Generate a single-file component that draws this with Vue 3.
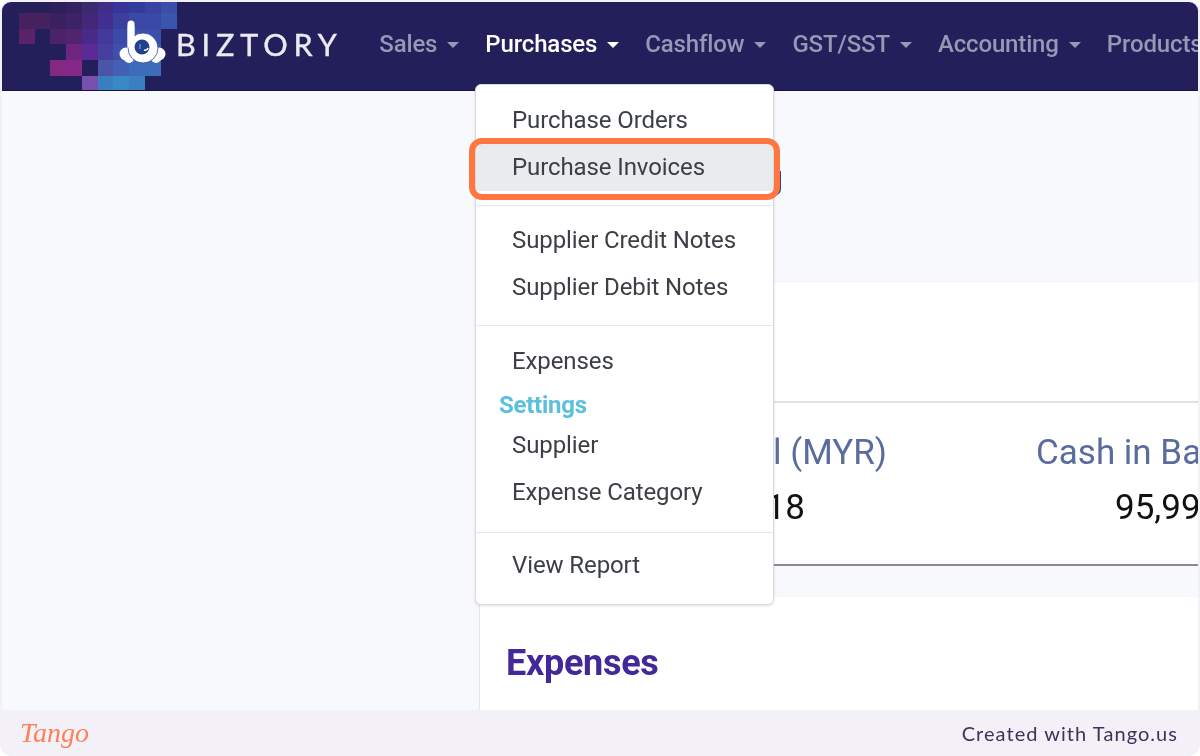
<script setup>
const N = '#231f5a'
const cols = [19, 35, 50, 66, 82, 98, 113, 129, 145, 161, 177]
const rows = [2, 13, 29, 44, 60, 76, 90]
const grid = [
  ['#262058', '#272058', '#2c2059', '#33225f', '#3a2a72', '#3c2f85', '#37359a', '#343a9c', '#3a41a0', '#3a50a8'],
  ['#46215f', '#46215f', '#3a2060', '#3c2266', '#45277a', '#432f90', '#3a3f9e', '#3a49a6', '#3a49a6', '#3b55ae'],
  ['#5a2268', N, '#4c2268', '#4f2570', '#4a2a88', '#44389a', '#3a4aa6', '#3a4fa8', '#3a4fa8', null],
  [null, null, null, '#6f2680', '#5a2a96', '#4540a0', '#3f50ac', '#3c58b0', '#3c58b0', null],
  [null, null, '#85287f', '#85288a', N, '#4a55aa', '#4260b4', '#3d6cba', '#3d6cba', null],
  [null, null, null, null, '#7a50ae', '#3a7ec0', '#3a88c4', '#3a80c0', null, null]
]
const cells = []
grid.forEach((r, y) => r.forEach((fill, x) => {
  if (fill) cells.push({ id: `${x}-${y}`, x: cols[x], y: rows[y], w: cols[x + 1] - cols[x], h: rows[y + 1] - rows[y], fill })
}))
const navItems = [
  { label: 'Sales' },
  { label: 'Purchases', active: true },
  { label: 'Cashflow' },
  { label: 'GST/SST' },
  { label: 'Accounting' },
  { label: 'Products' }
]
</script>

<template>
  <div class="shell">
    <div class="window">
      <header class="nav">
        <svg class="mosaic" width="190" height="89" viewBox="0 0 190 89" aria-hidden="true">
          <rect v-for="c in cells" :key="c.id" :x="c.x - 2" :y="c.y - 2" :width="c.w" :height="c.h" :fill="c.fill" />
        </svg>
        <div class="brand">
          <svg class="logo" width="50" height="50" viewBox="0 0 50 50" aria-hidden="true">
            <circle cx="8" cy="35" r="6.5" fill="#fff" />
            <circle cx="11" cy="39" r="5" fill="#fff" />
            <circle cx="41" cy="35" r="6.5" fill="#fff" />
            <circle cx="38" cy="39" r="5" fill="#fff" />
            <path d="M13 5 V30" stroke="#fff" stroke-width="7" stroke-linecap="round" fill="none" />
            <circle cx="25" cy="29" r="15" fill="#fff" stroke="#2f4a9e" stroke-width="0.8" />
            <path d="M9.6 30 V8 a3.4 3.4 0 0 1 6.8 0 V20 Z" fill="#fff" />
            <circle cx="24" cy="28" r="7.5" fill="#23408a" />
            <path d="M26 31 a3 3 0 0 0 4 -2" stroke="#fff" stroke-width="1.6" fill="none" />
            <path d="M22 25 v5" stroke="#6f8ac8" stroke-width="1.5" />
          </svg>
          <span class="wordmark">BIZTORY</span>
        </div>
        <nav class="links">
          <a v-for="item in navItems" :key="item.label" class="link" :class="{ active: item.active }">
            {{ item.label }}<i class="caret"></i>
          </a>
        </nav>
      </header>

      <main class="content">
        <div class="title-row">
          <h1 class="title">Accounting</h1>
        </div>
        <section class="card top"></section>
        <section class="card stats">
          <div class="stat first">
            <div class="label">Total (MYR)</div>
            <div class="value">1,218</div>
          </div>
          <div class="stat second">
            <div class="label">Cash in Bank (MYR)</div>
            <div class="value">95,999.18</div>
          </div>
        </section>
        <section class="card expenses">
          <h2>Expenses</h2>
        </section>

        <div class="menu">
          <a class="item">Purchase Orders</a>
          <a class="item hover">Purchase Invoices</a>
          <hr class="rule one" />
          <a class="item">Supplier Credit Notes</a>
          <a class="item">Supplier Debit Notes</a>
          <hr class="rule two" />
          <a class="item">Expenses</a>
          <div class="menu-head">Settings</div>
          <a class="item">Supplier</a>
          <a class="item">Expense Category</a>
          <hr class="rule three" />
          <a class="item">View Report</a>
        </div>
      </main>
    </div>
    <footer class="footer">
      <span class="tango">Tango</span>
      <span class="credit">Created with Tango.us</span>
    </footer>
  </div>
</template>

<style>
html, body { margin: 0; background: #fff; }
</style>

<style scoped>
.shell {
  width: 1200px;
  height: 756px;
  display: flex;
  flex-direction: column;
  background: #f3f1f7;
  border-radius: 12px;
  overflow: hidden;
  font-family: Roboto, "Liberation Sans", sans-serif;
  filter: blur(0.5px);
}
.window {
  flex: 1;
  min-height: 0;
  margin: 2px 2px 0;
  display: flex;
  flex-direction: column;
  border-radius: 9px 9px 0 0;
  overflow: hidden;
}
.nav {
  position: relative;
  height: 89px;
  flex: none;
  display: flex;
  align-items: center;
  padding-bottom: 5px;
  background: #231f5a;
  border-bottom: 1px solid #171348;
  box-sizing: border-box;
  white-space: nowrap;
}
.mosaic { position: absolute; left: 0; top: 0; }
.brand {
  position: relative;
  display: flex;
  align-items: center;
  margin-left: 116px;
}
.logo { flex: none; }
.wordmark {
  margin-left: 8px;
  font-family: Lato, sans-serif;
  font-size: 30.5px;
  letter-spacing: 5.9px;
  -webkit-text-stroke: 0.4px #eaeaf2;
  color: #eaeaf2;
}
.links {
  display: flex;
  margin-left: 36.6px;
  gap: 26px;
}
.link {
  display: flex;
  align-items: center;
  font-size: 24px;
  font-weight: 500;
  letter-spacing: -0.15px;
  color: #9797b6;
}
.link.active { color: #fff; }
.caret {
  width: 0;
  height: 0;
  margin-left: 10px;
  margin-top: 3px;
  border-left: 6px solid transparent;
  border-right: 6px solid transparent;
  border-top: 6px solid currentColor;
}
.content {
  position: relative;
  flex: 1;
  min-height: 0;
  background: #f8f9fd;
  padding-left: 477px;
}
.title-row {
  height: 192px;
  box-sizing: border-box;
  padding-top: 66px;
  width: 304px;
  text-align: right;
}
.title {
  margin: 0;
  font-size: 34px;
  line-height: 40px;
  font-weight: 500;
  color: #1d3d8f;
}
.card {
  background: #fff;
  border-left: 1px solid #e6e7ee;
  box-sizing: border-box;
}
.top { height: 118px; }
.stats {
  height: 165px;
  display: flex;
  border-top: 2px solid #dfe1e6;
  border-bottom: 2px solid #8b8b8f;
  padding-top: 27px;
  white-space: nowrap;
}
.stat { flex: none; }
.first { width: 407px; text-align: right; }
.second { margin-left: 149px; }
.label {
  font-size: 35px;
  line-height: 46px;
  color: #5a6c9d;
}
.value {
  font-size: 35px;
  line-height: 46px;
  margin-top: 9px;
  color: #111;
}
.first .value { margin-right: 82px; }
.second .value { margin-left: 79px; }
.expenses {
  height: 114px;
  margin-top: 31px;
  padding: 46px 0 0 26px;
}
.expenses h2 {
  margin: 0;
  font-size: 36px;
  line-height: 40px;
  font-weight: 700;
  letter-spacing: -0.3px;
  color: #43289a;
}
.menu {
  position: absolute;
  left: 473px;
  top: -7px;
  width: 299px;
  height: 521px;
  box-sizing: border-box;
  padding-top: 12px;
  background: #fff;
  border: 1px solid #d9d9dd;
  border-radius: 6px;
  box-shadow: 0 1px 3px rgba(0, 0, 0, .12);
}
.item {
  position: relative;
  display: block;
  height: 47px;
  line-height: 47px;
  padding-left: 36px;
  font-size: 24px;
  color: #3c4046;
  letter-spacing: -0.1px;
}
.hover { background: #e9ecef; }
.hover::after {
  content: "";
  position: absolute;
  left: -7px;
  right: -7px;
  top: -6px;
  bottom: -9px;
  border: 6px solid #ff7640;
  border-radius: 13px;
}
.rule {
  margin: 0;
  border: 0;
  border-top: 1px solid #e6e7ea;
}
.rule.one { margin: 14px 0 11px; }
.rule.two { margin: 14px 0 12px; }
.rule.three { margin: 16px 0 9px; }
.menu-head {
  height: 37px;
  line-height: 40px;
  padding-left: 23px;
  font-size: 24px;
  font-weight: 700;
  letter-spacing: -0.25px;
  color: #5bc0de;
}
.footer {
  flex: none;
  height: 46px;
  display: flex;
  align-items: center;
  justify-content: space-between;
  padding: 0 22px 0 20px;
}
.tango {
  font-family: "Liberation Serif", serif;
  font-style: italic;
  font-size: 28px;
  color: #ff8058;
}
.credit {
  font-family: Lato, sans-serif;
  font-size: 20px;
  letter-spacing: 1.05px;
  color: #3f3159;
}
</style>
